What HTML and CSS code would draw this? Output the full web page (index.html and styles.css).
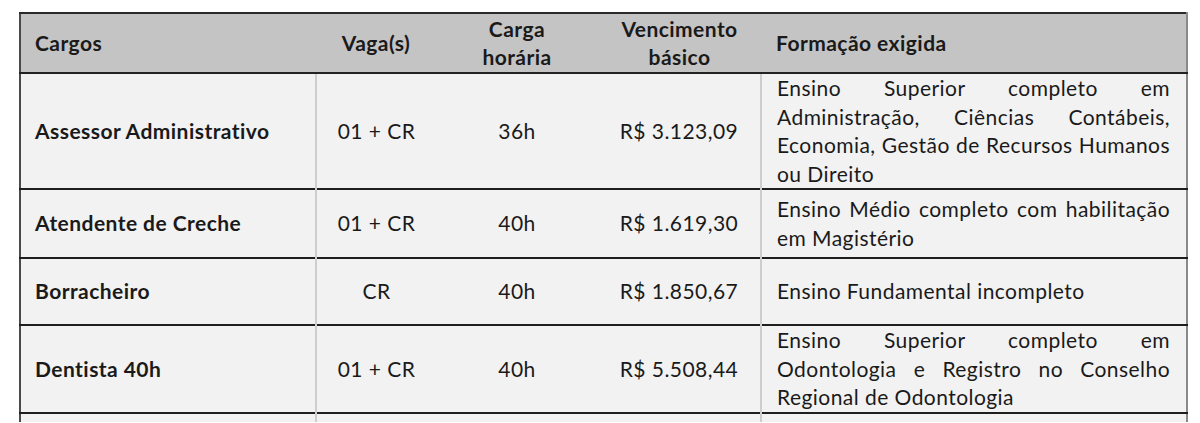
FILE: index.html
```html
<!DOCTYPE html>
<html lang="pt-BR">
<head>
<meta charset="utf-8">
<title>Cargos</title>
<link rel="stylesheet" href="styles.css">
</head>
<body>
<div class="page">
<table class="cargos">
  <colgroup>
    <col class="c1"><col class="c2"><col class="c3"><col class="c4"><col class="c5">
  </colgroup>
  <thead>
    <tr>
      <th class="left">Cargos</th>
      <th>Vaga(s)</th>
      <th>Carga<br>horária</th>
      <th>Vencimento<br>básico</th>
      <th class="left form">Formação exigida</th>
    </tr>
  </thead>
  <tbody>
    <tr class="r1">
      <td class="name">Assessor Administrativo</td>
      <td class="mid div">01 + CR</td>
      <td class="mid">36h</td>
      <td class="mid">R$ 3.123,09</td>
      <td class="form div"><span class="j">Ensino Superior completo em</span><span class="j">Administração, Ciências Contábeis,</span><span class="j">Economia, Gestão de Recursos Humanos</span><span class="l">ou Direito</span></td>
    </tr>
    <tr class="r2">
      <td class="name">Atendente de Creche</td>
      <td class="mid div">01 + CR</td>
      <td class="mid">40h</td>
      <td class="mid">R$ 1.619,30</td>
      <td class="form div"><span class="j">Ensino Médio completo com habilitação</span><span class="l">em Magistério</span></td>
    </tr>
    <tr class="r3">
      <td class="name">Borracheiro</td>
      <td class="mid div">CR</td>
      <td class="mid">40h</td>
      <td class="mid">R$ 1.850,67</td>
      <td class="form div"><span class="l">Ensino Fundamental incompleto</span></td>
    </tr>
    <tr class="r4">
      <td class="name">Dentista 40h</td>
      <td class="mid div">01 + CR</td>
      <td class="mid">40h</td>
      <td class="mid">R$ 5.508,44</td>
      <td class="form div"><span class="j">Ensino Superior completo em</span><span class="j">Odontologia e Registro no Conselho</span><span class="l">Regional de Odontologia</span></td>
    </tr>
    <tr class="r5">
      <td class="name"></td>
      <td class="mid div"></td>
      <td class="mid"></td>
      <td class="mid"></td>
      <td class="form div"></td>
    </tr>
  </tbody>
</table>
</div>
</body>
</html>
```
FILE: styles.css
```css
html, body {
  margin: 0;
  padding: 0;
  background: #ffffff;
}
.page {
  padding: 12px 0 0 19px;
}
.cargos {
  border-collapse: collapse;
  table-layout: fixed;
  width: 1167px;
  font-family: Lato, "Liberation Sans", sans-serif;
  font-size: 21px;
  letter-spacing: 0.45px;
  color: #1a1a1a;
  border-left: 2px solid #4a4a4a;
  border-right: 2px solid #8a8a8a;
  border-top: 2px solid #2a2a2a;
}
.c1 { width: 296px; }
.c2 { width: 120px; }
.c3 { width: 162px; }
.c4 { width: 163px; }
.c5 { width: 426px; }
.cargos th {
  background: #c4c4c4;
  font-weight: 700;
  line-height: 28px;
  height: 58px;
  padding: 0;
  text-align: center;
  vertical-align: middle;
  border-bottom: 2px solid #222;
}
.cargos th.left {
  text-align: left;
  padding-left: 14px;
}
.cargos th.form {
  padding-left: 15px;
}
.cargos td {
  background: #f2f2f2;
  border-top: 2px solid #1e1e1e;
  padding: 0;
  line-height: 28.5px;
  vertical-align: middle;
}
.cargos td.name {
  font-weight: 700;
  padding-left: 14px;
}
.cargos td.mid {
  text-align: center;
}
.cargos td.div {
  border-left: 2px solid #cdcdcd;
}
.cargos td.form {
  padding: 0 16px 0 15px;
}
.j {
  display: block;
  text-align: justify;
  text-align-last: justify;
  white-space: nowrap;
}
.l {
  display: block;
  text-align: left;
  white-space: nowrap;
}
.r1 td { height: 114px; }
.r2 td { height: 67px; }
.r3 td { height: 65px; }
.r4 td { height: 86px; }
.r5 td { height: 8px; }
```
